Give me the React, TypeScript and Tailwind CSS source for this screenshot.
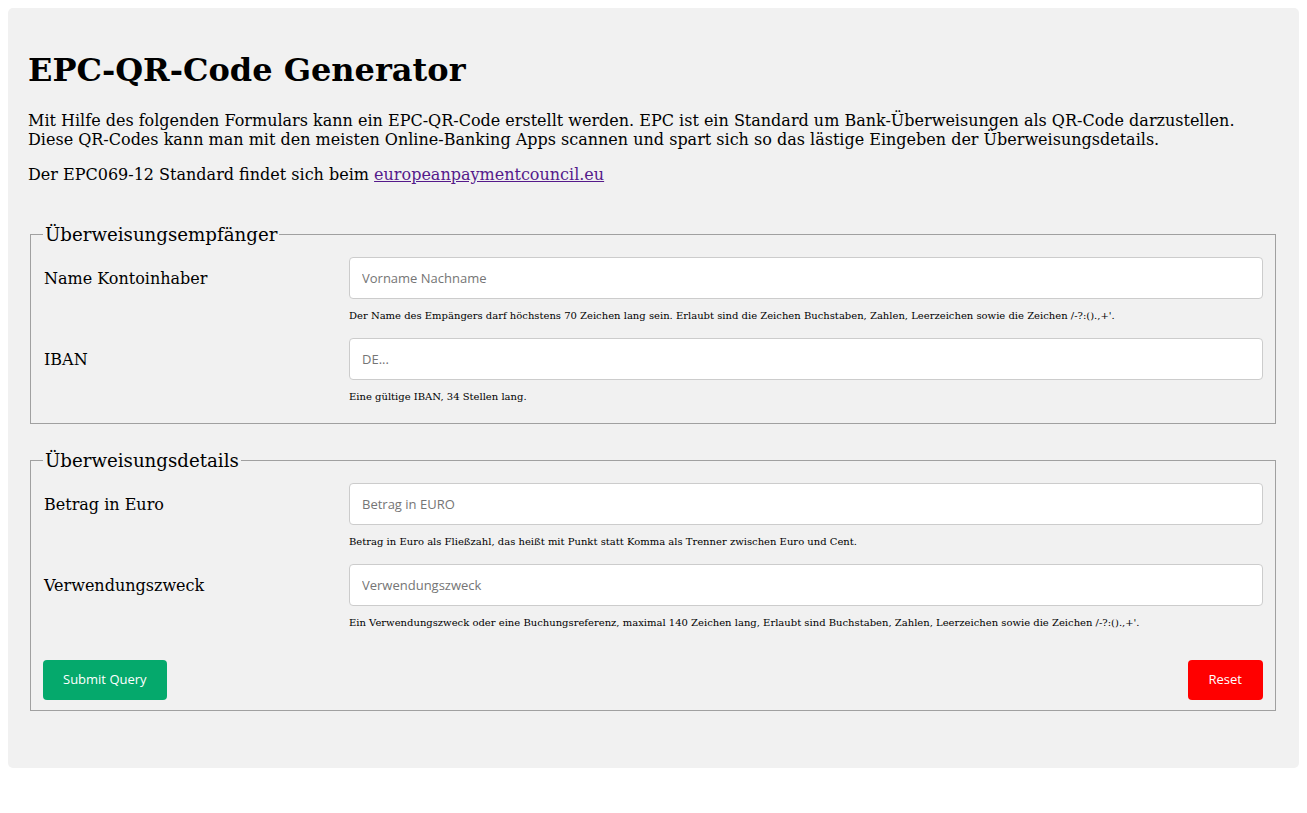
import React from "react";

const serif = { fontFamily: '"DejaVu Serif", serif' };

function Row({ label, placeholder, help }: { label: string; placeholder: string; help: string }) {
  return (
    <div className="mb-[15.9px] grid grid-cols-[306px_1fr]">
      <label className="flex items-center pl-px pt-[2px] text-[16px] leading-[18.6px] text-black">{label}</label>
      <div>
        <input
          type="text"
          placeholder={placeholder}
          className="block h-[42px] w-full rounded-[4px] border border-[#cccccc] bg-white px-[12px] text-[13px] text-black outline-none placeholder:text-[#757575]"
          style={{ fontFamily: '"Open Sans", sans-serif' }}
        />
      </div>
      <div />
      <div className="mt-[11.5px] text-[10px] leading-[11.6px] text-black">{help}</div>
    </div>
  );
}

export default function App() {
  return (
    <div className="bg-white p-2" style={serif}>
      <div className="rounded-[5px] bg-[#f1f1f1] px-5 pb-[57px] pt-[44px] text-black">
        <h1 className="m-0 text-[32px] font-bold leading-[37px]">EPC-QR-Code Generator</h1>
        <p className="mt-[21.8px] text-[16px] leading-[19px]">
          Mit Hilfe des folgenden Formulars kann ein EPC-QR-Code erstellt werden. EPC ist ein Standard um Bank-Überweisungen als QR-Code darzustellen.
          <br />
          Diese QR-Codes kann man mit den meisten Online-Banking Apps scannen und spart sich so das lästige Eingeben der Überweisungsdetails.
        </p>
        <p className="mt-[16px] text-[16px] leading-[19px]">
          Der EPC069-12 Standard findet sich beim{" "}
          <a href="#" className="text-[#551a8b] underline">
            europeanpaymentcouncil.eu
          </a>
        </p>
        <form onSubmit={(e) => e.preventDefault()}>
          <fieldset className="ml-[2px] mr-[3px] mt-[40.6px] border border-[#a0a0a0] px-[12px] pb-[4px] pt-[11.5px]">
            <legend className="px-[2px] text-[18.2px] leading-[21px]">Überweisungsempfänger</legend>
            <Row
              label="Name Kontoinhaber"
              placeholder="Vorname Nachname"
              help="Der Name des Empängers darf höchstens 70 Zeichen lang sein. Erlaubt sind die Zeichen Buchstaben, Zahlen, Leerzeichen sowie die Zeichen /-?:().,+'."
            />
            <Row label="IBAN" placeholder="DE..." help="Eine gültige IBAN, 34 Stellen lang." />
          </fieldset>
          <fieldset className="ml-[2px] mr-[3px] mt-[26.5px] border border-[#a0a0a0] px-[12px] pb-[10px] pt-[11.5px]">
            <legend className="px-[2px] text-[18.2px] leading-[21px]">Überweisungsdetails</legend>
            <Row
              label="Betrag in Euro"
              placeholder="Betrag in EURO"
              help="Betrag in Euro als Fließzahl, das heißt mit Punkt statt Komma als Trenner zwischen Euro und Cent."
            />
            <Row
              label="Verwendungszweck"
              placeholder="Verwendungszweck"
              help="Ein Verwendungszweck oder eine Buchungsreferenz, maximal 140 Zeichen lang, Erlaubt sind Buchstaben, Zahlen, Leerzeichen sowie die Zeichen /-?:().,+'."
            />
            <div className="flex items-center justify-between pt-[15px]" style={{ fontFamily: '"Open Sans", sans-serif' }}>
              <button type="submit" className="h-[40px] rounded-[4px] bg-[#05a96c] px-[20px] text-[13px] text-white">
                Submit Query
              </button>
              <button type="reset" className="h-[40px] rounded-[4px] bg-[#ff0000] px-[21px] text-[13px] text-white">
                Reset
              </button>
            </div>
          </fieldset>
        </form>
      </div>
    </div>
  );
}
